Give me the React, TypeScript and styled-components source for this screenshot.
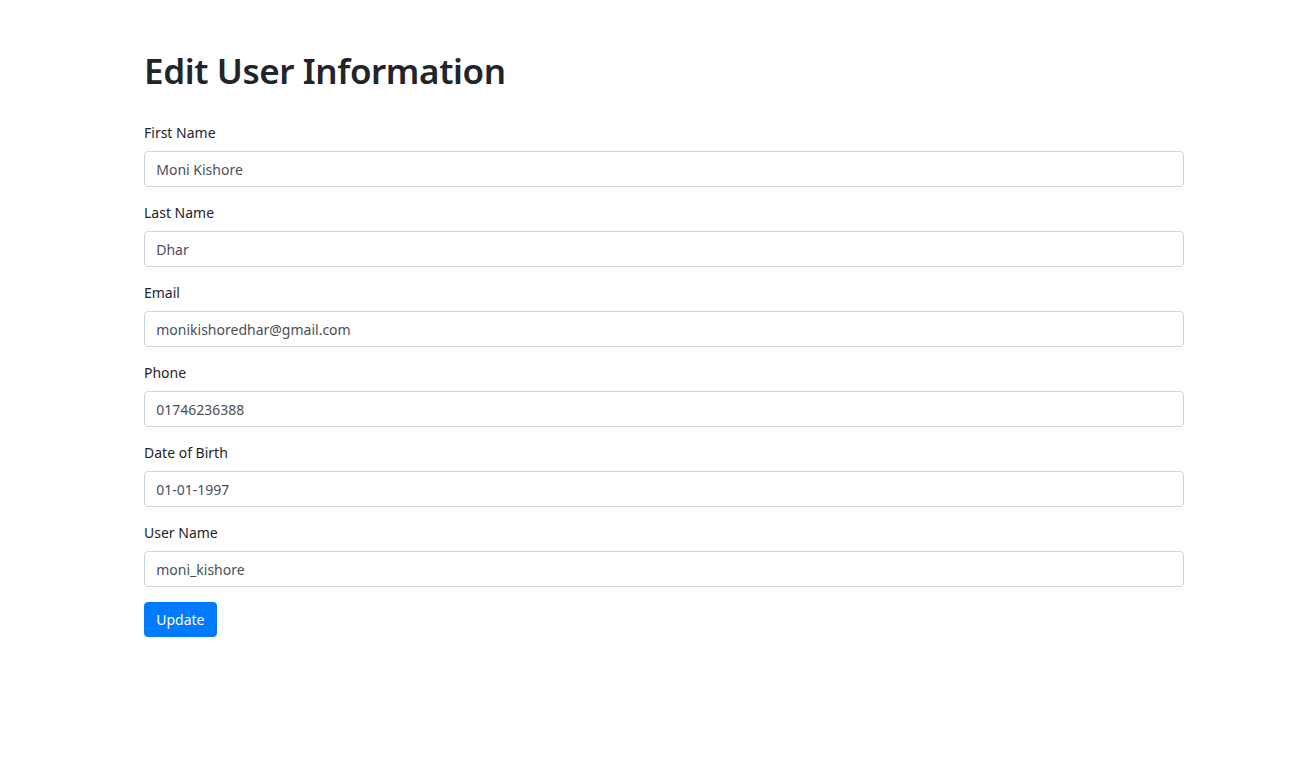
import React from "react";
import styled, { createGlobalStyle } from "styled-components";

const Global = createGlobalStyle`
  html, body { margin: 0; padding: 0; background: #fff; }
  body {
    font-family: "Noto Sans", "Open Sans", sans-serif;
    font-size: 15px;
    line-height: 1.5;
    color: #212529;
  }
  * { box-sizing: border-box; }
`;

const Page = styled.div`
  width: 1040px;
  margin-left: 144px;
  padding-top: 50px;
`;

const Title = styled.h1`
  margin: 0 0 28px;
  height: 44px;
  font-size: 35px;
  font-weight: 600;
  line-height: 42px;
  letter-spacing: -0.4px;
`;

const Form = styled.form`
  display: flex;
  flex-direction: column;
  gap: 15px;
  align-items: flex-start;
`;

const Group = styled.div`
  width: 100%;
  display: flex;
  flex-direction: column;
`;

const Label = styled.label`
  display: block;
  margin-bottom: 8px;
  font-size: 14px;
  line-height: 21px;
`;

const Input = styled.input`
  display: block;
  width: 100%;
  height: 36px;
  padding: 6px 11.25px;
  font: inherit;
  font-size: 14px;
  line-height: 22px;
  color: #495057;
  background: #fff;
  border: 1px solid #ced4da;
  border-radius: 3.75px;
  outline: none;
`;

const Button = styled.button`
  height: 35px;
  padding: 0 11.25px;
  font: inherit;
  font-size: 14px;
  color: #fff;
  background: #007bff;
  border: 1px solid #007bff;
  border-radius: 3.75px;
  cursor: pointer;
`;

const fields = [
  { label: "First Name", value: "Moni Kishore" },
  { label: "Last Name", value: "Dhar" },
  { label: "Email", value: "monikishoredhar@gmail.com" },
  { label: "Phone", value: "01746236388" },
  { label: "Date of Birth", value: "01-01-1997" },
  { label: "User Name", value: "moni_kishore" },
];

export default function App() {
  return (
    <>
      <Global />
      <Page>
        <Title>Edit User Information</Title>
        <Form onSubmit={(e) => e.preventDefault()}>
          {fields.map((f) => (
            <Group key={f.label}>
              <Label>{f.label}</Label>
              <Input defaultValue={f.value} />
            </Group>
          ))}
          <Button type="submit">Update</Button>
        </Form>
      </Page>
    </>
  );
}
